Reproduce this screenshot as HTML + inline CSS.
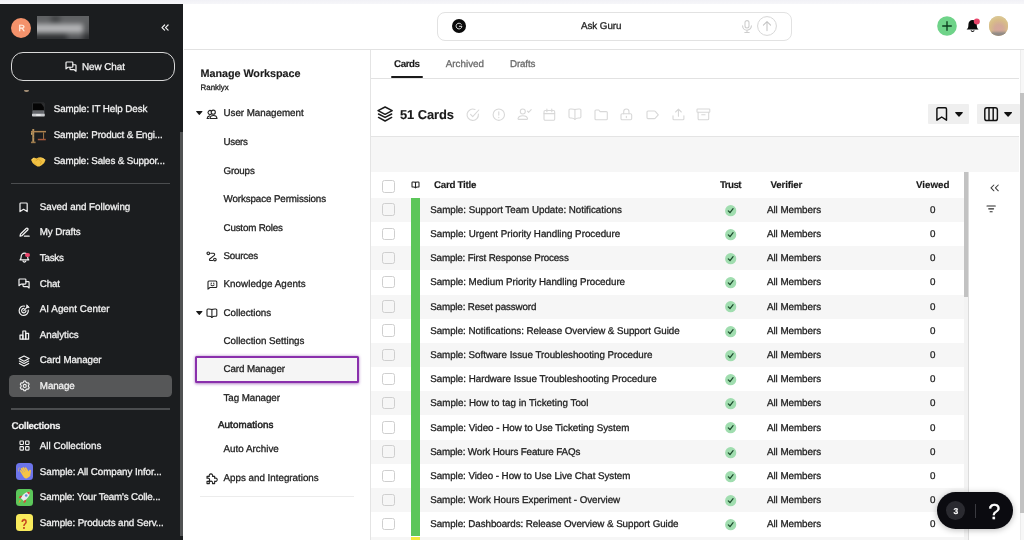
<!DOCTYPE html>
<html lang="en"><head><meta charset="utf-8"><title>Card Manager</title>
<style>
html,body{margin:0;padding:0}
body{width:1024px;height:540px;overflow:hidden;position:relative;background:#fff;font-family:"Liberation Sans", "DejaVu Sans", sans-serif;}
.t{position:absolute;white-space:nowrap;line-height:14px;-webkit-text-stroke:0.29px currentColor}
.a{position:absolute}
.q{-webkit-text-stroke:0.35px #fff}
.nq{transform:scaleX(.72);transform-origin:0 0}
.sb6{-webkit-text-stroke:0.5px currentColor}
.tx{position:absolute;left:0;top:0;width:1024px;height:540px;will-change:transform;text-rendering:geometricPrecision}
svg{position:absolute;overflow:visible}

.sb{left:0;top:4px;width:183.400px;height:536px;background:#1b1d1f}
.ln{height:1px}
.cb{width:10.6px;height:10.6px;border:1px solid #cfcfcf;border-radius:2.5px;background:transparent;box-sizing:content-box}

</style></head><body>
<div class="a" style="left:0.0px;top:0.0px;width:1024.0px;height:4.2px;background:linear-gradient(#f1f1f6,#f6f6f9)"></div>
<div class="a sb"></div>
<div class="a" style="left:179.8px;top:132.0px;width:3.6px;height:404.0px;background:#505253"></div>
<div class="a" style="left:11.1px;top:17.8px;width:20.1px;height:20.1px;background:#f4926b;border-radius:50%"></div>
<div class="a" style="left:36.7px;top:16px;width:52.3px;height:23px;overflow:hidden;background:#4b4d4f"><div class="a" style="left:-6px;top:-6px;width:64px;height:35px;filter:blur(2.4px)"><div class="a" style="left:0;top:0;width:64px;height:14px;background:#606264"></div><div class="a" style="left:20px;top:6px;width:9px;height:6px;background:#3c3e40"></div><div class="a" style="left:0;top:14px;width:52px;height:8.500px;background:#b4b5b7"></div><div class="a" style="left:52px;top:14px;width:12px;height:8.500px;background:#5a5c5e"></div><div class="a" style="left:0;top:23.500px;width:64px;height:12px;background:#2f3133"></div><div class="a" style="left:36px;top:24px;width:16px;height:6px;background:#5c5e60"></div></div></div>
<div class="a" style="left:11.0px;top:52.0px;width:164.0px;height:29.0px;border:1px solid #d9d9d9;border-radius:12px;box-sizing:border-box"></div>
<div class="a" style="left:24.4px;top:90.0px;width:4.2px;height:1.6px;background:#a08c74;border-radius:0 0 2px 2px"></div>
<div class="a" style="left:11.0px;top:183.0px;width:159.0px;height:1.2px;background:#4b4d4f"></div>
<div class="a" style="left:8.6px;top:374.6px;width:163.6px;height:22.6px;background:#565758;border-radius:4.5px"></div>
<div class="a" style="left:11.0px;top:408.4px;width:159.0px;height:1.2px;background:#4b4d4f"></div>
<div class="a" style="left:16.0px;top:463.0px;width:17.0px;height:17.0px;background:#6c74ea;border-radius:3.5px"></div>
<div class="a" style="left:16.0px;top:488.5px;width:17.0px;height:17.0px;background:#5cc75a;border-radius:3.5px"></div>
<div class="a" style="left:16.0px;top:514.0px;width:17.0px;height:17.0px;background:#f8ea5c;border-radius:3.5px"></div>
<div class="a" style="left:184.0px;top:49.0px;width:840.0px;height:1.0px;background:#e2e2e2"></div>
<div class="a" style="left:437.2px;top:12.2px;width:354.6px;height:28.8px;border:1px solid #e2e2e2;border-radius:8px;box-sizing:border-box;background:#fff"></div>
<div class="a" style="left:370.4px;top:50.0px;width:1.0px;height:490.0px;background:#e4e4e4"></div>
<div class="a" style="left:195.2px;top:355.6px;width:163.8px;height:27.0px;border:2.1px solid #8a30ac;box-sizing:border-box;background:#f5f5f5;box-shadow:0 .5px 3px rgba(125,40,160,.6);border-radius:1.5px"></div>
<div class="a" style="left:200.0px;top:496.0px;width:153.5px;height:1.0px;background:#ececec"></div>
<div class="a" style="left:371.4px;top:78.0px;width:648.1px;height:1.0px;background:#e2e2e2"></div>
<div class="a" style="left:391.2px;top:75.8px;width:31.4px;height:2.5px;background:#1a1a1a;border-radius:1.3px"></div>
<div class="a" style="left:927.8px;top:104.4px;width:41.5px;height:19.6px;background:#efefef;border-radius:1px"></div>
<div class="a" style="left:977.0px;top:104.4px;width:42.5px;height:19.6px;background:#efefef;border-radius:1px"></div>
<div class="a" style="left:371.4px;top:136.0px;width:648.1px;height:36.0px;background:#f6f6f6;border-top:1px solid #e4e4e4;box-sizing:border-box"></div>
<div class="a" style="left:371.4px;top:197.7px;width:592.6px;height:24.2px;background:#f6f6f6"></div>
<div class="a" style="left:371.4px;top:246.1px;width:592.6px;height:24.2px;background:#f6f6f6"></div>
<div class="a" style="left:371.4px;top:294.5px;width:592.6px;height:24.2px;background:#f6f6f6"></div>
<div class="a" style="left:371.4px;top:342.9px;width:592.6px;height:24.2px;background:#f6f6f6"></div>
<div class="a" style="left:371.4px;top:391.3px;width:592.6px;height:24.2px;background:#f6f6f6"></div>
<div class="a" style="left:371.4px;top:439.7px;width:592.6px;height:24.2px;background:#f6f6f6"></div>
<div class="a" style="left:371.4px;top:488.1px;width:592.6px;height:24.2px;background:#f6f6f6"></div>
<div class="a" style="left:371.4px;top:536.5px;width:592.6px;height:3.5px;background:#f6f6f6"></div>
<div class="a" style="left:411.0px;top:197.7px;width:8.7px;height:338.8px;background:#5cc65a"></div>
<div class="a" style="left:411.0px;top:536.5px;width:8.7px;height:3.5px;background:#f3e93c"></div>
<div class="a cb" style="left:382px;top:180.4px"></div>
<div class="a cb" style="left:382px;top:203.3px"></div>
<div class="a cb" style="left:382px;top:227.5px"></div>
<div class="a cb" style="left:382px;top:251.7px"></div>
<div class="a cb" style="left:382px;top:275.9px"></div>
<div class="a cb" style="left:382px;top:300.1px"></div>
<div class="a cb" style="left:382px;top:324.3px"></div>
<div class="a cb" style="left:382px;top:348.5px"></div>
<div class="a cb" style="left:382px;top:372.7px"></div>
<div class="a cb" style="left:382px;top:396.9px"></div>
<div class="a cb" style="left:382px;top:421.1px"></div>
<div class="a cb" style="left:382px;top:445.3px"></div>
<div class="a cb" style="left:382px;top:469.5px"></div>
<div class="a cb" style="left:382px;top:493.7px"></div>
<div class="a cb" style="left:382px;top:517.9px"></div>
<div class="a cb" style="left:382px;top:542.1px"></div>
<div class="a" style="left:964.0px;top:172.0px;width:4.6px;height:368.0px;background:#f3f3f3;border-right:1px solid #dcdcdc;box-sizing:border-box"></div>
<div class="a" style="left:964.0px;top:172.0px;width:4.2px;height:125.0px;background:#c2c2c2"></div>
<div class="a" style="left:1019.5px;top:50.0px;width:4.5px;height:490.0px;background:#f7f7f7;border-left:1px solid #ececec;box-sizing:border-box"></div>
<div class="a" style="left:1020.2px;top:93.3px;width:3.8px;height:419.5px;background:#c2c2c2"></div>
<div class="a" style="left:937.3px;top:491.8px;width:76.1px;height:37.0px;background:#0b0b10;border-radius:18.5px;box-shadow:0 1px 6px rgba(0,0,0,.28)"></div>
<div class="a" style="left:946.2px;top:501.0px;width:19.0px;height:19.0px;background:#2a2a30;border-radius:50%"></div>
<div class="a" style="left:975.0px;top:504.0px;width:1.0px;height:14.0px;background:#3a3a40"></div>
<div class="tx">
<span class="t" style="left:18.5px;top:21.00px;font-size:8.8px;color:#fff0e6;letter-spacing:0.000px">R</span>
<span class="t" style="left:82.0px;top:61.00px;font-size:9.9px;color:#f2f2f2;letter-spacing:-0.051px">New Chat</span>
<span class="t" style="left:53.7px;top:103.00px;font-size:9.8px;color:#f2f2f2;letter-spacing:-0.069px">Sample: IT Help Desk</span>
<span class="t" style="left:53.7px;top:129.00px;font-size:9.8px;color:#f2f2f2;letter-spacing:-0.133px">Sample: Product &amp; Engi...</span>
<span class="t" style="left:53.7px;top:155.00px;font-size:9.8px;color:#f2f2f2;letter-spacing:-0.128px">Sample: Sales &amp; Suppor...</span>
<span class="t" style="left:39.8px;top:201.00px;font-size:9.8px;color:#f2f2f2;letter-spacing:-0.025px">Saved and Following</span>
<span class="t" style="left:39.8px;top:226.00px;font-size:9.8px;color:#f2f2f2;letter-spacing:-0.128px">My Drafts</span>
<span class="t" style="left:39.8px;top:252.00px;font-size:9.8px;color:#f2f2f2;letter-spacing:-0.237px">Tasks</span>
<span class="t" style="left:39.8px;top:278.00px;font-size:9.8px;color:#f2f2f2;letter-spacing:-0.168px">Chat</span>
<span class="t" style="left:39.8px;top:303.00px;font-size:9.8px;color:#f2f2f2;letter-spacing:0.031px">AI Agent Center</span>
<span class="t" style="left:39.8px;top:329.00px;font-size:9.8px;color:#f2f2f2;letter-spacing:-0.038px">Analytics</span>
<span class="t" style="left:39.8px;top:354.00px;font-size:9.8px;color:#f2f2f2;letter-spacing:-0.075px">Card Manager</span>
<span class="t" style="left:39.8px;top:380.00px;font-size:9.8px;color:#f2f2f2;letter-spacing:-0.081px">Manage</span>
<span class="t" style="left:11.5px;top:420.00px;font-size:9.8px;color:#f2f2f2;letter-spacing:-0.381px;font-weight:700;-webkit-text-stroke-width:0.14px">Collections</span>
<span class="t" style="left:39.8px;top:440.00px;font-size:9.8px;color:#f2f2f2;letter-spacing:0.005px">All Collections</span>
<span class="t" style="left:39.8px;top:466.00px;font-size:9.8px;color:#f2f2f2;letter-spacing:-0.063px">Sample: All Company Infor...</span>
<span class="t" style="left:39.8px;top:491.00px;font-size:9.8px;color:#f2f2f2;letter-spacing:-0.151px">Sample: Your Team&#x27;s Colle...</span>
<span class="t" style="left:39.8px;top:517.00px;font-size:9.8px;color:#f2f2f2;letter-spacing:-0.104px">Sample: Products and Serv...</span>
<span class="t" style="left:200.5px;top:67.00px;font-size:10.8px;color:#1a1a1a;letter-spacing:-0.041px;font-weight:700;-webkit-text-stroke-width:0.14px">Manage Workspace</span>
<span class="t" style="left:200.5px;top:81.00px;font-size:7.9px;color:#222;letter-spacing:0.037px">Ranklyx</span>
<span class="t" style="left:223.5px;top:107.00px;font-size:9.8px;color:#222;letter-spacing:-0.035px">User Management</span>
<span class="t" style="left:223.5px;top:136.00px;font-size:9.8px;color:#222;letter-spacing:-0.273px">Users</span>
<span class="t" style="left:223.5px;top:165.00px;font-size:9.8px;color:#222;letter-spacing:-0.168px">Groups</span>
<span class="t" style="left:223.5px;top:193.00px;font-size:9.8px;color:#222;letter-spacing:-0.115px">Workspace Permissions</span>
<span class="t" style="left:223.5px;top:222.00px;font-size:9.8px;color:#222;letter-spacing:-0.185px">Custom Roles</span>
<span class="t" style="left:223.5px;top:250.00px;font-size:9.8px;color:#222;letter-spacing:-0.226px">Sources</span>
<span class="t" style="left:223.5px;top:278.00px;font-size:9.8px;color:#222;letter-spacing:0.062px">Knowledge Agents</span>
<span class="t" style="left:223.5px;top:307.00px;font-size:9.8px;color:#222;letter-spacing:-0.022px">Collections</span>
<span class="t" style="left:223.5px;top:335.00px;font-size:9.8px;color:#222;letter-spacing:-0.013px">Collection Settings</span>
<span class="t" style="left:223.5px;top:363.00px;font-size:9.8px;color:#222;letter-spacing:-0.102px">Card Manager</span>
<span class="t" style="left:223.5px;top:392.00px;font-size:9.8px;color:#222;letter-spacing:-0.069px">Tag Manager</span>
<span class="t sb6" style="left:217.9px;top:419.00px;font-size:9.8px;color:#222;letter-spacing:0.103px">Automations</span>
<span class="t" style="left:223.5px;top:443.00px;font-size:9.8px;color:#222;letter-spacing:0.026px">Auto Archive</span>
<span class="t" style="left:223.5px;top:472.00px;font-size:9.8px;color:#222;letter-spacing:-0.006px">Apps and Integrations</span>
<span class="t" style="left:581.0px;top:20.00px;font-size:9.8px;color:#222;letter-spacing:-0.049px">Ask Guru</span>
<span class="t" style="left:394.0px;top:58.00px;font-size:9.8px;color:#1a1a1a;letter-spacing:-0.445px;font-weight:700;-webkit-text-stroke-width:0.14px">Cards</span>
<span class="t" style="left:445.8px;top:58.00px;font-size:9.8px;color:#6a6a6a;letter-spacing:0.011px">Archived</span>
<span class="t" style="left:510.0px;top:58.00px;font-size:9.8px;color:#6a6a6a;letter-spacing:-0.148px">Drafts</span>
<span class="t" style="left:399.9px;top:108.00px;font-size:12.9px;color:#1a1a1a;letter-spacing:-0.053px;font-weight:700;-webkit-text-stroke-width:0.14px">51 Cards</span>
<span class="t" style="left:434.0px;top:179.00px;font-size:9.8px;color:#1a1a1a;letter-spacing:-0.291px;font-weight:700;-webkit-text-stroke-width:0.14px">Card Title</span>
<span class="t" style="left:720.0px;top:179.00px;font-size:9.8px;color:#1a1a1a;letter-spacing:-0.600px;font-weight:700;-webkit-text-stroke-width:0.14px">Trust</span>
<span class="t" style="left:770.6px;top:179.00px;font-size:9.8px;color:#1a1a1a;letter-spacing:-0.219px;font-weight:700;-webkit-text-stroke-width:0.14px">Verifier</span>
<span class="t" style="left:916.0px;top:179.00px;font-size:9.8px;color:#1a1a1a;letter-spacing:-0.019px;font-weight:700;-webkit-text-stroke-width:0.14px">Viewed</span>
<span class="t" style="left:430.2px;top:204.00px;font-size:9.8px;color:#222;letter-spacing:-0.022px">Sample: Support Team Update: Notifications</span>
<span class="t" style="left:766.9px;top:204.00px;font-size:9.8px;color:#222;letter-spacing:-0.025px">All Members</span>
<span class="t" style="left:930.0px;top:204.00px;font-size:9.8px;color:#222;letter-spacing:0.000px">0</span>
<span class="t" style="left:430.2px;top:228.00px;font-size:9.8px;color:#222;letter-spacing:-0.014px">Sample: Urgent Priority Handling Procedure</span>
<span class="t" style="left:766.9px;top:228.00px;font-size:9.8px;color:#222;letter-spacing:-0.025px">All Members</span>
<span class="t" style="left:930.0px;top:228.00px;font-size:9.8px;color:#222;letter-spacing:0.000px">0</span>
<span class="t" style="left:430.2px;top:252.00px;font-size:9.8px;color:#222;letter-spacing:-0.140px">Sample: First Response Process</span>
<span class="t" style="left:766.9px;top:252.00px;font-size:9.8px;color:#222;letter-spacing:-0.025px">All Members</span>
<span class="t" style="left:930.0px;top:252.00px;font-size:9.8px;color:#222;letter-spacing:0.000px">0</span>
<span class="t" style="left:430.2px;top:276.00px;font-size:9.8px;color:#222;letter-spacing:-0.028px">Sample: Medium Priority Handling Procedure</span>
<span class="t" style="left:766.9px;top:276.00px;font-size:9.8px;color:#222;letter-spacing:-0.025px">All Members</span>
<span class="t" style="left:930.0px;top:276.00px;font-size:9.8px;color:#222;letter-spacing:0.000px">0</span>
<span class="t" style="left:430.2px;top:301.00px;font-size:9.8px;color:#222;letter-spacing:-0.129px">Sample: Reset password</span>
<span class="t" style="left:766.9px;top:301.00px;font-size:9.8px;color:#222;letter-spacing:-0.025px">All Members</span>
<span class="t" style="left:930.0px;top:301.00px;font-size:9.8px;color:#222;letter-spacing:0.000px">0</span>
<span class="t" style="left:430.2px;top:325.00px;font-size:9.8px;color:#222;letter-spacing:-0.050px">Sample: Notifications: Release Overview &amp; Support Guide</span>
<span class="t" style="left:766.9px;top:325.00px;font-size:9.8px;color:#222;letter-spacing:-0.025px">All Members</span>
<span class="t" style="left:930.0px;top:325.00px;font-size:9.8px;color:#222;letter-spacing:0.000px">0</span>
<span class="t" style="left:430.2px;top:349.00px;font-size:9.8px;color:#222;letter-spacing:-0.033px">Sample: Software Issue Troubleshooting Procedure</span>
<span class="t" style="left:766.9px;top:349.00px;font-size:9.8px;color:#222;letter-spacing:-0.025px">All Members</span>
<span class="t" style="left:930.0px;top:349.00px;font-size:9.8px;color:#222;letter-spacing:0.000px">0</span>
<span class="t" style="left:430.2px;top:373.00px;font-size:9.8px;color:#222;letter-spacing:-0.022px">Sample: Hardware Issue Troubleshooting Procedure</span>
<span class="t" style="left:766.9px;top:373.00px;font-size:9.8px;color:#222;letter-spacing:-0.025px">All Members</span>
<span class="t" style="left:930.0px;top:373.00px;font-size:9.8px;color:#222;letter-spacing:0.000px">0</span>
<span class="t" style="left:430.2px;top:397.00px;font-size:9.8px;color:#222;letter-spacing:0.016px">Sample: How to tag in Ticketing Tool</span>
<span class="t" style="left:766.9px;top:397.00px;font-size:9.8px;color:#222;letter-spacing:-0.025px">All Members</span>
<span class="t" style="left:930.0px;top:397.00px;font-size:9.8px;color:#222;letter-spacing:0.000px">0</span>
<span class="t" style="left:430.2px;top:422.00px;font-size:9.8px;color:#222;letter-spacing:-0.013px">Sample: Video - How to Use Ticketing System</span>
<span class="t" style="left:766.9px;top:422.00px;font-size:9.8px;color:#222;letter-spacing:-0.025px">All Members</span>
<span class="t" style="left:930.0px;top:422.00px;font-size:9.8px;color:#222;letter-spacing:0.000px">0</span>
<span class="t" style="left:430.2px;top:446.00px;font-size:9.8px;color:#222;letter-spacing:-0.124px">Sample: Work Hours Feature FAQs</span>
<span class="t" style="left:766.9px;top:446.00px;font-size:9.8px;color:#222;letter-spacing:-0.025px">All Members</span>
<span class="t" style="left:930.0px;top:446.00px;font-size:9.8px;color:#222;letter-spacing:0.000px">0</span>
<span class="t" style="left:430.2px;top:470.00px;font-size:9.8px;color:#222;letter-spacing:-0.052px">Sample: Video - How to Use Live Chat System</span>
<span class="t" style="left:766.9px;top:470.00px;font-size:9.8px;color:#222;letter-spacing:-0.025px">All Members</span>
<span class="t" style="left:930.0px;top:470.00px;font-size:9.8px;color:#222;letter-spacing:0.000px">0</span>
<span class="t" style="left:430.2px;top:494.00px;font-size:9.8px;color:#222;letter-spacing:-0.052px">Sample: Work Hours Experiment - Overview</span>
<span class="t" style="left:766.9px;top:494.00px;font-size:9.8px;color:#222;letter-spacing:-0.025px">All Members</span>
<span class="t" style="left:930.0px;top:494.00px;font-size:9.8px;color:#222;letter-spacing:0.000px">0</span>
<span class="t" style="left:430.2px;top:518.00px;font-size:9.8px;color:#222;letter-spacing:-0.063px">Sample: Dashboards: Release Overview &amp; Support Guide</span>
<span class="t" style="left:766.9px;top:518.00px;font-size:9.8px;color:#222;letter-spacing:-0.025px">All Members</span>
<span class="t" style="left:930.0px;top:518.00px;font-size:9.8px;color:#222;letter-spacing:0.000px">0</span>
<span class="t" style="left:953.4px;top:504.00px;font-size:8.6px;color:#fff;letter-spacing:0.000px;font-weight:700;-webkit-text-stroke-width:0.14px">3</span>
<span class="t q" style="left:988.2px;top:505.00px;font-size:21.5px;color:#fff;letter-spacing:0.000px">?</span>
<span class="t nq" style="left:20.8px;top:518.00px;font-size:14.5px;color:#c4441f;letter-spacing:0.000px;font-weight:700;-webkit-text-stroke-width:0.14px">?</span>
</div>
<svg style="left:32.0px;top:103.3px" width="12.8" height="13.5" viewBox="0 0 12.800 13.500" fill="none" ><rect x=".5" y="0" width="11.800" height="7.600" rx=".5" fill="#050505" stroke="#4a4c4e" stroke-width=".5"/><path d="M9 .300h3v4z" fill="#3a3c3e" opacity=".7"/><rect x=".5" y="7.600" width="11.800" height="3.200" fill="#7d8084"/><path d="M1.200 8.400h10.400M1.200 9.600h10.400" stroke="#4c4e52" stroke-width=".6"/><path d="M0 10.800h12.800v1.900a.8.800 0 0 1-.8.800H.8a.8.800 0 0 1-.8-.8z" fill="#c9cbce"/><rect x="4.200" y="11.300" width="4.400" height="1.500" rx=".3" fill="#eceded"/></svg>
<svg style="left:31.4px;top:129.3px" width="15" height="14.2" viewBox="0 0 15 14.200" fill="none" ><rect x="1.300" y="0" width="1.900" height="13" fill="#b99560"/><path d="M1.300 1.600 3.200 3.400M3.200 4.600 1.300 6.400M1.300 7.600 3.200 9.400" stroke="#8a6b40" stroke-width=".5"/><rect x="0" y="1.900" width="15" height="1.500" fill="#b08552"/><rect x="0" y="12.600" width="4.600" height="1.600" fill="#9c7a4c"/><rect x="12" y="3.400" width="1.100" height="6.800" fill="#9a7144"/><rect x="6.800" y="9.800" width="8" height="1.500" fill="#a5583c"/><rect x="0" y="3.400" width="1.300" height="2.400" fill="#c9a467"/></svg>
<svg style="left:31.4px;top:157.4px" width="14.6" height="9.6" viewBox="0 0 14.600 9.600" fill="none" ><path d="M0 2.800 2.800 .600 5.600 1.400 7.300 .600l2.600-.4 2 .8 2.700 1.800-1.400 3.200-2.600 2.200-2.200 1.400-2-.2-2.800-1.600L1.600 6z" fill="#f2c243"/><path d="M4.600 3.800 7.400 2l3 2.600-1.200 2.800" stroke="#d49a22" stroke-width=".7" fill="none"/><path d="M3 5.800 6.200 8.600M5.600 1.400l1.200 1" stroke="#dca52c" stroke-width=".6" fill="none"/><path d="M1 2.600 3 1.200M11.600 1.400l2 1.400" stroke="#fbe08a" stroke-width=".7" fill="none"/></svg>
<svg style="left:20.30px;top:202.80px" width="7.20" height="8.60" viewBox="0 0 8 10" preserveAspectRatio="none" fill="none"><path d="M0 1a1 1 0 0 1 1-1h6a1 1 0 0 1 1 1v9L4 7.300 0 10z" stroke="#f2f2f2" stroke-width="1.2" fill="none" stroke-linecap="round" stroke-linejoin="round" vector-effect="non-scaling-stroke" /></svg>
<svg style="left:19.60px;top:228.20px" width="9.20" height="8.20" viewBox="0 0 10 9" preserveAspectRatio="none" fill="none"><path d="M0.600 6.600 6.700 .500a1.150 1.150 0 0 1 1.700 1.700L2.300 8.300 0 9z" stroke="#f2f2f2" stroke-width="1.2" fill="none" stroke-linecap="round" stroke-linejoin="round" vector-effect="non-scaling-stroke" /><path d="M4.800 9h5.200" stroke="#f2f2f2" stroke-width="1.2" fill="none" stroke-linecap="round" stroke-linejoin="round" vector-effect="non-scaling-stroke" /></svg>
<svg style="left:20.00px;top:253.20px" width="8.80" height="9.50" viewBox="0 0 10 10.5" preserveAspectRatio="none" fill="none"><path d="M0 7.600c1.100-.9 1.400-2 1.400-3.900a3.600 3.600 0 0 1 7.200 0c0 1.900.3 3 1.400 3.900z" stroke="#f2f2f2" stroke-width="1.2" fill="none" stroke-linecap="round" stroke-linejoin="round" vector-effect="non-scaling-stroke" /><path d="M3.400 8.900a1.700 1.700 0 0 0 3.200 0" stroke="#f2f2f2" stroke-width="1.2" fill="none" stroke-linecap="round" stroke-linejoin="round" vector-effect="non-scaling-stroke" /></svg>
<div class="a" style="left:25.1px;top:252.700px;width:4.600px;height:4.600px;border-radius:50%;background:#e8446a"></div>
<svg style="left:19.40px;top:279.20px" width="10.10" height="9.00" viewBox="0 0 11 10" preserveAspectRatio="none" fill="none"><path d="M0 .900a.9.900 0 0 1 .9-.9h5.700a.9.900 0 0 1 .9.900v3.900a.9.900 0 0 1-.9.900H2.100L0 7.400z" stroke="#f2f2f2" stroke-width="1.2" fill="none" stroke-linecap="round" stroke-linejoin="round" vector-effect="non-scaling-stroke" /><path d="M7.500 3h2.600a.9.900 0 0 1 .9.900V10L9.100 8.400H5.300a.9.900 0 0 1-.9-.9V5.700" stroke="#f2f2f2" stroke-width="1.2" fill="none" stroke-linecap="round" stroke-linejoin="round" vector-effect="non-scaling-stroke" /></svg>
<svg style="left:66.00px;top:62.10px" width="10.00" height="9.20" viewBox="0 0 11 10" preserveAspectRatio="none" fill="none"><path d="M0 .900a.9.900 0 0 1 .9-.9h5.700a.9.900 0 0 1 .9.900v3.900a.9.900 0 0 1-.9.900H2.100L0 7.400z" stroke="#f2f2f2" stroke-width="1.2" fill="none" stroke-linecap="round" stroke-linejoin="round" vector-effect="non-scaling-stroke" /><path d="M7.500 3h2.600a.9.900 0 0 1 .9.900V10L9.100 8.400H5.300a.9.900 0 0 1-.9-.9V5.700" stroke="#f2f2f2" stroke-width="1.2" fill="none" stroke-linecap="round" stroke-linejoin="round" vector-effect="non-scaling-stroke" /></svg>
<svg style="left:19.20px;top:305.30px" width="10.30" height="10.60" viewBox="0 0 11 11" preserveAspectRatio="none" fill="none"><path d="M9.900 5.200A4.900 4.900 0 1 1 5.800 1.100" stroke="#f2f2f2" stroke-width="1.2" fill="none" stroke-linecap="round" stroke-linejoin="round" vector-effect="non-scaling-stroke" /><path d="M7.400 5.700A2.300 2.300 0 1 1 5.300 3.600" stroke="#f2f2f2" stroke-width="1.2" fill="none" stroke-linecap="round" stroke-linejoin="round" vector-effect="non-scaling-stroke" /><path d="M5.100 5.900 9.600 1.400" stroke="#f2f2f2" stroke-width="1.2" fill="none" stroke-linecap="round" stroke-linejoin="round" vector-effect="non-scaling-stroke" /><path d="M8.300 .2v2.500h2.500L9.700 1.300z" stroke="#f2f2f2" stroke-width="1.0" fill="none" stroke-linecap="round" stroke-linejoin="round" vector-effect="non-scaling-stroke" /></svg>
<svg style="left:19.60px;top:330.60px" width="8.60" height="8.20" viewBox="0 0 9 8.5" preserveAspectRatio="none" fill="none"><path d="M0 4.200h3v4.300H0z" stroke="#f2f2f2" stroke-width="1.2" fill="none" stroke-linecap="round" stroke-linejoin="round" vector-effect="non-scaling-stroke" /><path d="M3 0h3v8.500H3z" stroke="#f2f2f2" stroke-width="1.2" fill="none" stroke-linecap="round" stroke-linejoin="round" vector-effect="non-scaling-stroke" /><path d="M6 2.400h3v6.100H6z" stroke="#f2f2f2" stroke-width="1.2" fill="none" stroke-linecap="round" stroke-linejoin="round" vector-effect="non-scaling-stroke" /></svg>
<svg style="left:19.10px;top:355.80px" width="10.10" height="9.90" viewBox="0 0 10 10" preserveAspectRatio="none" fill="none"><path d="M5 0 10 2.600 5 5.200 0 2.600z" stroke="#f2f2f2" stroke-width="1.15" fill="none" stroke-linecap="round" stroke-linejoin="round" vector-effect="non-scaling-stroke" /><path d="M.4 5.100 5 7.500 9.600 5.100" stroke="#f2f2f2" stroke-width="1.15" fill="none" stroke-linecap="round" stroke-linejoin="round" vector-effect="non-scaling-stroke" /><path d="M.4 7.500 5 10 9.600 7.500" stroke="#f2f2f2" stroke-width="1.15" fill="none" stroke-linecap="round" stroke-linejoin="round" vector-effect="non-scaling-stroke" /></svg>
<svg style="left:19.50px;top:381.30px" width="9.50" height="9.90" viewBox="0 0 10 10" preserveAspectRatio="none" fill="none"><path d="M4.17 0.07 L5.83 0.07 L6.36 1.34 L7.49 1.99 L8.85 1.81 L9.69 3.26 L8.85 4.35 L8.85 5.65 L9.69 6.74 L8.85 8.19 L7.49 8.01 L6.36 8.66 L5.83 9.93 L4.17 9.93 L3.64 8.66 L2.51 8.01 L1.15 8.19 L0.31 6.74 L1.15 5.65 L1.15 4.35 L0.31 3.26 L1.15 1.81 L2.51 1.99 L3.64 1.34z" stroke="#f2f2f2" stroke-width="1.1" fill="none" stroke-linecap="round" stroke-linejoin="round" vector-effect="non-scaling-stroke" /><circle cx="5" cy="5" r="1.600" stroke="#f2f2f2" stroke-width="1.100" vector-effect="non-scaling-stroke"/></svg>
<svg style="left:19.50px;top:441.30px" width="9.00" height="9.10" viewBox="0 0 10 10" preserveAspectRatio="none" fill="none"><rect x="0" y="0" width="3.8" height="3.8" rx="0.7" stroke="#f2f2f2" stroke-width="1.1" vector-effect="non-scaling-stroke"/><rect x="6.2" y="0" width="3.8" height="3.8" rx="0.7" stroke="#f2f2f2" stroke-width="1.1" vector-effect="non-scaling-stroke"/><rect x="0" y="6.2" width="3.8" height="3.8" rx="0.7" stroke="#f2f2f2" stroke-width="1.1" vector-effect="non-scaling-stroke"/><rect x="6.2" y="6.2" width="3.8" height="3.8" rx="0.7" stroke="#f2f2f2" stroke-width="1.1" vector-effect="non-scaling-stroke"/></svg>
<svg style="left:16.0px;top:463.0px" width="17" height="17" viewBox="0 0 17 17" fill="none" ><g transform="translate(9.700 10.400) rotate(-32)" fill="#f6c445"><rect x="-3.700" y="-1.800" width="7.400" height="6.600" rx="2.800"/><rect x="-3.700" y="-5.600" width="1.700" height="6" rx=".85"/><rect x="-1.850" y="-6.900" width="1.700" height="7" rx=".85"/><rect x="0" y="-6.700" width="1.700" height="7" rx=".85"/><rect x="1.850" y="-5.400" width="1.700" height="6" rx=".85"/><rect x="2.600" y="-1.600" width="1.800" height="4.600" rx=".9" transform="rotate(38 3.500 2)"/></g><path d="M2.600 8.200a4.200 4.200 0 0 1 .5-3.400" stroke="#f6c445" stroke-width=".7" fill="none" stroke-linecap="round" opacity=".8"/></svg>
<svg style="left:16.0px;top:488.5px" width="17" height="17" viewBox="0 0 17 17" fill="none" ><path d="M13.800 2.800c-2.600-.2-5.200 1-7.400 3.800L4.800 9l3 3 2.400-1.600c2.800-2.200 3.900-4.900 3.600-7.600z" fill="#e9e9ee"/><path d="M13.800 2.800c-1-.1-2 .1-3 .5l2.400 2.500c.5-1 .7-2 .6-3z" fill="#d9453a"/><circle cx="10.200" cy="6.500" r="1.300" fill="#5b8fd6"/><path d="M6.400 6.600 3.800 7 2.600 9.200l2.200-.2zM10.200 10.400l-.4 2.600-2.200 1.200.2-2.200z" fill="#d9453a"/><path d="M5.200 11.600 2.400 14.400l1-3.200z" fill="#f29a2e"/></svg>
<svg style="left:451.7px;top:19.0px" width="14" height="14" viewBox="0 0 14 14" fill="none" ><circle cx="7" cy="7" r="7" fill="#0a0a0a"/><path d="M9.400 5.400A2.900 2.900 0 1 0 9.900 7.300H7.300" stroke="#fff" stroke-width=".85" stroke-linecap="round" stroke-linejoin="round"/></svg>
<svg style="left:741.3px;top:19.6px" width="12" height="13" viewBox="0 0 12 13" fill="none" ><rect x="4" y="0.6" width="4" height="7.4" rx="2" stroke="#cdcdcd" stroke-width="1.05" stroke-linecap="round" stroke-linejoin="round"/><path d="M1.600 5.800a4.400 4.400 0 0 0 8.800 0M6 10.300v2M3.800 12.400h4.400" stroke="#cdcdcd" stroke-width="1.05" stroke-linecap="round" stroke-linejoin="round"/></svg>
<svg style="left:757.4px;top:16.2px" width="20" height="20" viewBox="0 0 20 20" fill="none" ><circle cx="10" cy="10" r="9.400" stroke="#d6d6d6" stroke-width="1"/><path d="M10 14.600V5.800M6.400 9.200 10 5.600l3.600 3.600" stroke="#c4c4c4" stroke-width="1.050" stroke-linecap="round" stroke-linejoin="round"/></svg>
<svg style="left:937.3px;top:16.4px" width="20" height="20" viewBox="0 0 20 20" fill="none" ><circle cx="10" cy="10" r="9.800" fill="#6fd389"/><path d="M10 5.700v8.600M5.700 10h8.600" stroke="#0e3d1f" stroke-width="1.350" stroke-linecap="round"/></svg>
<svg style="left:966.4px;top:19.2px" width="14" height="14" viewBox="0 0 14 14" fill="none" ><path d="M0.600 10.400c1.600-1.200 1.800-2.600 1.800-5A4.200 4.200 0 0 1 6.600 1.100 4.200 4.200 0 0 1 10.800 5.400c0 2.400.2 3.800 1.800 5z" fill="#0a0a0a"/><path d="M5 11.400a1.700 1.700 0 0 0 3.200 0" stroke="#0a0a0a" stroke-width="1.100"/><circle cx="10.800" cy="2.500" r="3" fill="#e8446a"/></svg>
<div class="a" style="left:988.9px;top:16.4px;width:19.6px;height:19.6px;border-radius:50%;overflow:hidden;background:#d9c48e"><div class="a" style="left:-2px;top:-2px;width:24px;height:24px;background:radial-gradient(circle at 50% 62%,#d6a79c 0,#d3aa98 22%,#d8bd88 48%,#dccb9a 70%,#cdb98c 100%);filter:blur(.6px)"></div><div class="a" style="left:2px;top:15.500px;width:16px;height:5px;background:#8f8a86;filter:blur(1.2px)"></div></div>
<svg style="left:195.70px;top:111.40px" width="6.60" height="3.90" viewBox="0 0 10 6" preserveAspectRatio="none"><path d="M0.900 0h8.200a.7.700 0 0 1 .5 1.200L5.600 5.700a.8.800 0 0 1-1.200 0L.4 1.200A.7.700 0 0 1 .9 0z" fill="#1a1a1a"/></svg>
<svg style="left:195.70px;top:310.60px" width="6.60" height="3.90" viewBox="0 0 10 6" preserveAspectRatio="none"><path d="M0.900 0h8.200a.7.700 0 0 1 .5 1.200L5.600 5.700a.8.800 0 0 1-1.200 0L.4 1.200A.7.700 0 0 1 .9 0z" fill="#1a1a1a"/></svg>
<svg style="left:207.00px;top:109.50px" width="10.10" height="8.50" viewBox="0 0 10 8.6" preserveAspectRatio="none" fill="none"><circle cx="6.2" cy="2.2" r="2.05" stroke="#242424" stroke-width="1.1" fill="none" vector-effect="non-scaling-stroke"/><path d="M4.300 1A2 2 0 1 0 4 4.250" stroke="#242424" stroke-width="1.1" fill="none" stroke-linecap="round" stroke-linejoin="round" vector-effect="non-scaling-stroke" /><path d="M2.900 8.600c.2-2 1.500-3 3.500-3s3.300 1 3.500 3z" stroke="#242424" stroke-width="1.1" fill="none" stroke-linecap="round" stroke-linejoin="round" vector-effect="non-scaling-stroke" /><path d="M2.600 5.900C1.200 6.100.300 7 .100 8.600h1.500" stroke="#242424" stroke-width="1.1" fill="none" stroke-linecap="round" stroke-linejoin="round" vector-effect="non-scaling-stroke" /></svg>
<svg style="left:207.40px;top:251.50px" width="9.20" height="8.90" viewBox="0 0 9.2 8.9" preserveAspectRatio="none" fill="none"><circle cx="1.3" cy="1.3" r="1.3" stroke="#242424" stroke-width="1.1" fill="none" vector-effect="non-scaling-stroke"/><circle cx="7.9" cy="7.6" r="1.3" stroke="#242424" stroke-width="1.1" fill="none" vector-effect="non-scaling-stroke"/><path d="M3.600 1.200h2.800a1.300 1.300 0 0 1 .9 2.200L2.700 7a.9.900 0 0 0 .6 1.500h2.400" stroke="#242424" stroke-width="1.1" fill="none" stroke-linecap="round" stroke-linejoin="round" vector-effect="non-scaling-stroke" /></svg>
<svg style="left:207.70px;top:280.50px" width="8.80" height="8.10" viewBox="0 0 9 8.2" preserveAspectRatio="none" fill="none"><path d="M1 0h7a1 1 0 0 1 1 1v4.600a1 1 0 0 1-1 1H2L0 8.200V1a1 1 0 0 1 1-1z" stroke="#242424" stroke-width="1.1" fill="none" stroke-linecap="round" stroke-linejoin="round" vector-effect="non-scaling-stroke" /><path d="M3.300 2v.8M5.900 2v.8" stroke="#242424" stroke-width="1.0" fill="none" stroke-linecap="round" stroke-linejoin="round" vector-effect="non-scaling-stroke" /><path d="M3 4a2 2 0 0 0 3.200 0" stroke="#242424" stroke-width="1.0" fill="none" stroke-linecap="round" stroke-linejoin="round" vector-effect="non-scaling-stroke" /></svg>
<svg style="left:207.20px;top:308.60px" width="9.80" height="8.40" viewBox="0 0 10 8.6" preserveAspectRatio="none" fill="none"><path d="M5 .500C4.300.150 3.300 0 2 0H1A1 1 0 0 0 0 1v5.500a1 1 0 0 0 1 1h1c1.500 0 2.400.3 3 1.100.6-.8 1.500-1.100 3-1.100h1a1 1 0 0 0 1-1V1a1 1 0 0 0-1-1H8C6.700 0 5.700.150 5 .500z" stroke="#242424" stroke-width="1.1" fill="none" stroke-linecap="round" stroke-linejoin="round" vector-effect="non-scaling-stroke" /><path d="M5 .500v8.100" stroke="#242424" stroke-width="1.1" fill="none" stroke-linecap="round" stroke-linejoin="round" vector-effect="non-scaling-stroke" /></svg>
<svg style="left:206.70px;top:473.80px" width="10.2" height="9.6" viewBox="0.8 0.45 8.8 8.75" preserveAspectRatio="none" fill="none"><path d="M.8 2.600h2.100a1.500 1.500 0 1 1 2.600 0h1.900v1.800a1.500 1.500 0 1 1 0 2.600v2.200H5.500a1.500 1.500 0 1 0-2.600 0H.8V7a1.500 1.500 0 1 0 0-2.600z" stroke="#242424" stroke-width="1.1" fill="none" stroke-linecap="round" stroke-linejoin="round" vector-effect="non-scaling-stroke" /></svg>
<svg style="left:378.20px;top:107.30px" width="14.20" height="14.00" viewBox="0 0 14 13.4" preserveAspectRatio="none" fill="none"><path d="M7 0 14 3.500 7 7 0 3.500z" stroke="#1a1a1a" stroke-width="1.45" fill="none" stroke-linecap="round" stroke-linejoin="round" vector-effect="non-scaling-stroke" /><path d="M.5 6.700 7 10 13.500 6.700" stroke="#1a1a1a" stroke-width="1.45" fill="none" stroke-linecap="round" stroke-linejoin="round" vector-effect="non-scaling-stroke" /><path d="M.5 10 7 13.400 13.500 10" stroke="#1a1a1a" stroke-width="1.45" fill="none" stroke-linecap="round" stroke-linejoin="round" vector-effect="non-scaling-stroke" /></svg>
<svg style="left:466.60px;top:108.80px" width="12.60" height="11.40" viewBox="0 0 12.6 11.4" preserveAspectRatio="none" fill="none"><path d="M11.400 5A5.700 5.700 0 1 1 8 .500" stroke="#d8d8d8" stroke-width="1.1" fill="none" stroke-linecap="round" stroke-linejoin="round" vector-effect="non-scaling-stroke" /><path d="M3.600 5.400 5.700 7.600 11.800 1" stroke="#d8d8d8" stroke-width="1.1" fill="none" stroke-linecap="round" stroke-linejoin="round" vector-effect="non-scaling-stroke" /></svg>
<svg style="left:492.60px;top:108.80px" width="11.60" height="11.40" viewBox="0 0 11.6 11.4" preserveAspectRatio="none" fill="none"><circle cx="5.8" cy="5.7" r="5.7" stroke="#d8d8d8" stroke-width="1.1" fill="none" vector-effect="non-scaling-stroke"/><path d="M5.800 2.800v3.300M5.800 8.400v.2" stroke="#d8d8d8" stroke-width="1.1" fill="none" stroke-linecap="round" stroke-linejoin="round" vector-effect="non-scaling-stroke" /></svg>
<svg style="left:517.80px;top:109.20px" width="13.20" height="10.40" viewBox="0 0 13.2 10.4" preserveAspectRatio="none" fill="none"><circle cx="4.8" cy="2.5" r="2.5" stroke="#d8d8d8" stroke-width="1.1" fill="none" vector-effect="non-scaling-stroke"/><path d="M0 9.800c.3-2 1.900-3 4.800-3s4.500 1 4.800 3c0 .4-.2.600-.6.600H.6C.2 10.400 0 10.200 0 9.800z" stroke="#d8d8d8" stroke-width="1.1" fill="none" stroke-linecap="round" stroke-linejoin="round" vector-effect="non-scaling-stroke" /><path d="M9.400 2.100l1.200 1.200L13.200.700" stroke="#d8d8d8" stroke-width="1.1" fill="none" stroke-linecap="round" stroke-linejoin="round" vector-effect="non-scaling-stroke" /></svg>
<svg style="left:544.30px;top:108.80px" width="10.70" height="11.30" viewBox="0 0 10.7 11.3" preserveAspectRatio="none" fill="none"><path d="M1.200 1.500h8.300a1.200 1.200 0 0 1 1.200 1.200v7.400a1.200 1.200 0 0 1-1.200 1.200H1.200A1.200 1.200 0 0 1 0 10.100V2.700a1.200 1.200 0 0 1 1.200-1.200z" stroke="#d8d8d8" stroke-width="1.1" fill="none" stroke-linecap="round" stroke-linejoin="round" vector-effect="non-scaling-stroke" /><path d="M0 4.600h10.700M2.900 0v2.800M7.800 0v2.800" stroke="#d8d8d8" stroke-width="1.1" fill="none" stroke-linecap="round" stroke-linejoin="round" vector-effect="non-scaling-stroke" /></svg>
<svg style="left:569.40px;top:109.30px" width="11.90" height="10.30" viewBox="0 0 10 8.6" preserveAspectRatio="none" fill="none"><path d="M5 .500C4.300.150 3.300 0 2 0H1A1 1 0 0 0 0 1v5.500a1 1 0 0 0 1 1h1c1.500 0 2.400.3 3 1.100.6-.8 1.500-1.100 3-1.100h1a1 1 0 0 0 1-1V1a1 1 0 0 0-1-1H8C6.700 0 5.700.150 5 .500z" stroke="#d8d8d8" stroke-width="1.1" fill="none" stroke-linecap="round" stroke-linejoin="round" vector-effect="non-scaling-stroke" /><path d="M5 .500v8.100" stroke="#d8d8d8" stroke-width="1.1" fill="none" stroke-linecap="round" stroke-linejoin="round" vector-effect="non-scaling-stroke" /></svg>
<svg style="left:594.60px;top:109.80px" width="12.30" height="9.70" viewBox="0 0 12.3 9.7" preserveAspectRatio="none" fill="none"><path d="M0 1a1 1 0 0 1 1-1h2.800l1.300 1.600h6.200a1 1 0 0 1 1 1v6.100a1 1 0 0 1-1 1H1a1 1 0 0 1-1-1z" stroke="#d8d8d8" stroke-width="1.1" fill="none" stroke-linecap="round" stroke-linejoin="round" vector-effect="non-scaling-stroke" /></svg>
<svg style="left:621.20px;top:108.80px" width="10.70" height="10.80" viewBox="0 0 10.7 10.8" preserveAspectRatio="none" fill="none"><path d="M1.200 4.800h8.300a1.200 1.200 0 0 1 1.200 1.200v3.600a1.200 1.200 0 0 1-1.200 1.200H1.200A1.200 1.200 0 0 1 0 9.600V6a1.200 1.200 0 0 1 1.200-1.200z" stroke="#d8d8d8" stroke-width="1.1" fill="none" stroke-linecap="round" stroke-linejoin="round" vector-effect="non-scaling-stroke" /><path d="M2.700 4.800V2.700a2.650 2.650 0 0 1 5.300 0v2.100M5.350 7.400v1.200" stroke="#d8d8d8" stroke-width="1.1" fill="none" stroke-linecap="round" stroke-linejoin="round" vector-effect="non-scaling-stroke" /></svg>
<svg style="left:646.90px;top:110.80px" width="11.30" height="7.60" viewBox="0 0 11.3 7.6" preserveAspectRatio="none" fill="none"><path d="M0 1a1 1 0 0 1 1-1h6.400c.4 0 .7.100.9.400L11.300 3.800 8.300 7.200c-.2.300-.5.400-.9.400H1a1 1 0 0 1-1-1z" stroke="#d8d8d8" stroke-width="1.1" fill="none" stroke-linecap="round" stroke-linejoin="round" vector-effect="non-scaling-stroke" /></svg>
<svg style="left:672.50px;top:108.80px" width="10.90" height="10.80" viewBox="0 0 10.9 10.8" preserveAspectRatio="none" fill="none"><path d="M5.450 7.300V.300M2.600 3 5.450 .100 8.300 3" stroke="#d8d8d8" stroke-width="1.1" fill="none" stroke-linecap="round" stroke-linejoin="round" vector-effect="non-scaling-stroke" /><path d="M0 6.800v3a1 1 0 0 0 1 1h8.900a1 1 0 0 0 1-1v-3" stroke="#d8d8d8" stroke-width="1.1" fill="none" stroke-linecap="round" stroke-linejoin="round" vector-effect="non-scaling-stroke" /></svg>
<svg style="left:696.70px;top:108.80px" width="12.80" height="10.80" viewBox="0 0 12.8 10.8" preserveAspectRatio="none" fill="none"><path d="M.6 0h11.600a.6.600 0 0 1 .6.600v2a.6.600 0 0 1-.6.600H.6A.6.600 0 0 1 0 2.600v-2A.6.600 0 0 1 .6 0z" stroke="#d8d8d8" stroke-width="1.1" fill="none" stroke-linecap="round" stroke-linejoin="round" vector-effect="non-scaling-stroke" /><path d="M1.100 3.200v6.600a1 1 0 0 0 1 1h8.600a1 1 0 0 0 1-1V3.200M4.700 5.800h3.400" stroke="#d8d8d8" stroke-width="1.1" fill="none" stroke-linecap="round" stroke-linejoin="round" vector-effect="non-scaling-stroke" /></svg>
<svg style="left:935.7px;top:107.4px" width="11.4" height="14.2" viewBox="0 0 11.400 14.200" fill="none" ><path d="M0.900 2a1.200 1.200 0 0 1 1.200-1.200h7.200A1.200 1.200 0 0 1 10.500 2v11.200L5.700 10 .9 13.200z" stroke="#111" stroke-width="1.450" stroke-linejoin="round"/></svg>
<svg style="left:954.60px;top:112.30px" width="8.00" height="4.70" viewBox="0 0 10 6" preserveAspectRatio="none"><path d="M0.900 0h8.200a.7.700 0 0 1 .5 1.200L5.600 5.700a.8.800 0 0 1-1.200 0L.4 1.200A.7.700 0 0 1 .9 0z" fill="#111"/></svg>
<svg style="left:984.2px;top:107.4px" width="14.2" height="14.4" viewBox="0 0 14.200 14.400" fill="none" ><rect x="0.800" y="0.800" width="12.600" height="12.800" rx="2.200" stroke="#111" stroke-width="1.450"/><path d="M5 .8v12.800M9.200 .8v12.800" stroke="#111" stroke-width="1.450"/></svg>
<svg style="left:1004.20px;top:112.30px" width="8.20" height="4.70" viewBox="0 0 10 6" preserveAspectRatio="none"><path d="M0.900 0h8.200a.7.700 0 0 1 .5 1.200L5.600 5.700a.8.800 0 0 1-1.200 0L.4 1.200A.7.700 0 0 1 .9 0z" fill="#111"/></svg>
<svg style="left:412.00px;top:181.50px" width="7.00" height="5.80" viewBox="0 0 10 8.6" preserveAspectRatio="none" fill="none"><path d="M5 .500C4.300.150 3.300 0 2 0H1A1 1 0 0 0 0 1v5.500a1 1 0 0 0 1 1h1c1.500 0 2.400.3 3 1.100.6-.8 1.500-1.100 3-1.100h1a1 1 0 0 0 1-1V1a1 1 0 0 0-1-1H8C6.700 0 5.700.150 5 .500z" stroke="#222" stroke-width="1.05" fill="none" stroke-linecap="round" stroke-linejoin="round" vector-effect="non-scaling-stroke" /><path d="M5 .500v8.100" stroke="#222" stroke-width="1.05" fill="none" stroke-linecap="round" stroke-linejoin="round" vector-effect="non-scaling-stroke" /></svg>
<svg style="left:725.0px;top:204.5px" width="11.4" height="11.4" viewBox="0 0 11.400 11.400" fill="none" ><circle cx="5.700" cy="5.700" r="5.600" fill="#a0ddaf"/><path d="M3.300 5.900 5 7.700 8.100 3.700" stroke="#1b4a2b" stroke-width="1.250" stroke-linecap="round" stroke-linejoin="round"/></svg>
<svg style="left:725.0px;top:228.7px" width="11.4" height="11.4" viewBox="0 0 11.400 11.400" fill="none" ><circle cx="5.700" cy="5.700" r="5.600" fill="#a0ddaf"/><path d="M3.300 5.900 5 7.700 8.100 3.700" stroke="#1b4a2b" stroke-width="1.250" stroke-linecap="round" stroke-linejoin="round"/></svg>
<svg style="left:725.0px;top:252.9px" width="11.4" height="11.4" viewBox="0 0 11.400 11.400" fill="none" ><circle cx="5.700" cy="5.700" r="5.600" fill="#a0ddaf"/><path d="M3.300 5.900 5 7.700 8.100 3.700" stroke="#1b4a2b" stroke-width="1.250" stroke-linecap="round" stroke-linejoin="round"/></svg>
<svg style="left:725.0px;top:277.1px" width="11.4" height="11.4" viewBox="0 0 11.400 11.400" fill="none" ><circle cx="5.700" cy="5.700" r="5.600" fill="#a0ddaf"/><path d="M3.300 5.900 5 7.700 8.100 3.700" stroke="#1b4a2b" stroke-width="1.250" stroke-linecap="round" stroke-linejoin="round"/></svg>
<svg style="left:725.0px;top:301.3px" width="11.4" height="11.4" viewBox="0 0 11.400 11.400" fill="none" ><circle cx="5.700" cy="5.700" r="5.600" fill="#a0ddaf"/><path d="M3.300 5.900 5 7.700 8.100 3.700" stroke="#1b4a2b" stroke-width="1.250" stroke-linecap="round" stroke-linejoin="round"/></svg>
<svg style="left:725.0px;top:325.5px" width="11.4" height="11.4" viewBox="0 0 11.400 11.400" fill="none" ><circle cx="5.700" cy="5.700" r="5.600" fill="#a0ddaf"/><path d="M3.300 5.900 5 7.700 8.100 3.700" stroke="#1b4a2b" stroke-width="1.250" stroke-linecap="round" stroke-linejoin="round"/></svg>
<svg style="left:725.0px;top:349.7px" width="11.4" height="11.4" viewBox="0 0 11.400 11.400" fill="none" ><circle cx="5.700" cy="5.700" r="5.600" fill="#a0ddaf"/><path d="M3.300 5.900 5 7.700 8.100 3.700" stroke="#1b4a2b" stroke-width="1.250" stroke-linecap="round" stroke-linejoin="round"/></svg>
<svg style="left:725.0px;top:373.9px" width="11.4" height="11.4" viewBox="0 0 11.400 11.400" fill="none" ><circle cx="5.700" cy="5.700" r="5.600" fill="#a0ddaf"/><path d="M3.300 5.900 5 7.700 8.100 3.700" stroke="#1b4a2b" stroke-width="1.250" stroke-linecap="round" stroke-linejoin="round"/></svg>
<svg style="left:725.0px;top:398.1px" width="11.4" height="11.4" viewBox="0 0 11.400 11.400" fill="none" ><circle cx="5.700" cy="5.700" r="5.600" fill="#a0ddaf"/><path d="M3.300 5.900 5 7.700 8.100 3.700" stroke="#1b4a2b" stroke-width="1.250" stroke-linecap="round" stroke-linejoin="round"/></svg>
<svg style="left:725.0px;top:422.3px" width="11.4" height="11.4" viewBox="0 0 11.400 11.400" fill="none" ><circle cx="5.700" cy="5.700" r="5.600" fill="#a0ddaf"/><path d="M3.300 5.900 5 7.700 8.100 3.700" stroke="#1b4a2b" stroke-width="1.250" stroke-linecap="round" stroke-linejoin="round"/></svg>
<svg style="left:725.0px;top:446.5px" width="11.4" height="11.4" viewBox="0 0 11.400 11.400" fill="none" ><circle cx="5.700" cy="5.700" r="5.600" fill="#a0ddaf"/><path d="M3.300 5.900 5 7.700 8.100 3.700" stroke="#1b4a2b" stroke-width="1.250" stroke-linecap="round" stroke-linejoin="round"/></svg>
<svg style="left:725.0px;top:470.7px" width="11.4" height="11.4" viewBox="0 0 11.400 11.400" fill="none" ><circle cx="5.700" cy="5.700" r="5.600" fill="#a0ddaf"/><path d="M3.300 5.900 5 7.700 8.100 3.700" stroke="#1b4a2b" stroke-width="1.250" stroke-linecap="round" stroke-linejoin="round"/></svg>
<svg style="left:725.0px;top:494.9px" width="11.4" height="11.4" viewBox="0 0 11.400 11.400" fill="none" ><circle cx="5.700" cy="5.700" r="5.600" fill="#a0ddaf"/><path d="M3.300 5.900 5 7.700 8.100 3.700" stroke="#1b4a2b" stroke-width="1.250" stroke-linecap="round" stroke-linejoin="round"/></svg>
<svg style="left:725.0px;top:519.1px" width="11.4" height="11.4" viewBox="0 0 11.400 11.400" fill="none" ><circle cx="5.700" cy="5.700" r="5.600" fill="#a0ddaf"/><path d="M3.300 5.900 5 7.700 8.100 3.700" stroke="#1b4a2b" stroke-width="1.250" stroke-linecap="round" stroke-linejoin="round"/></svg>
<svg style="left:990.60px;top:185.00px" width="7.30" height="5.80" viewBox="0 0 7.3 5.8" preserveAspectRatio="none" fill="none"><path d="M2.900 0 0 2.900l2.900 2.900M7.300 0 4.400 2.900l2.900 2.900" stroke="#3c3c3c" stroke-width="1.05" fill="none" stroke-linecap="round" stroke-linejoin="round" vector-effect="non-scaling-stroke" /></svg>
<svg style="left:987.20px;top:206.10px" width="8.30" height="5.70" viewBox="0 0 8.3 5.6" preserveAspectRatio="none" fill="none"><path d="M0 0h8.300M1.700 2.800h4.900M3.100 5.600h2.100" stroke="#2a2a2a" stroke-width="1.1" fill="none" stroke-linecap="round" stroke-linejoin="round" vector-effect="non-scaling-stroke" /></svg>
<svg style="left:161.90px;top:25.30px" width="6.10" height="5.20" viewBox="0 0 6.1 5.2" preserveAspectRatio="none" fill="none"><path d="M2.600 0 0 2.600l2.600 2.600M6.100 0 3.500 2.600l2.600 2.600" stroke="#f2f2f2" stroke-width="1.2" fill="none" stroke-linecap="round" stroke-linejoin="round" vector-effect="non-scaling-stroke" /></svg>
</body></html>
